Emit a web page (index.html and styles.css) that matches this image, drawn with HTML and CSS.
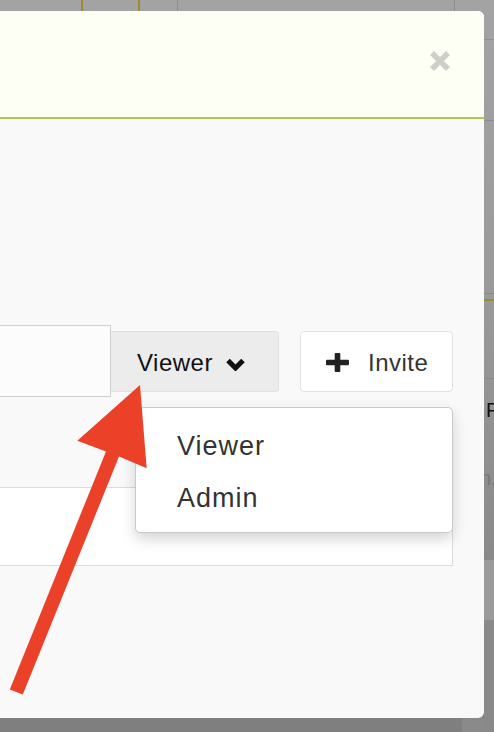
FILE: index.html
```html
<!DOCTYPE html>
<html lang="en">
<head>
<meta charset="utf-8">
<title>Invite</title>
<link rel="stylesheet" href="styles.css">
</head>
<body>
<div class="page">
  <div class="page-main"></div>
  <div class="page-side">
    <span class="side-f">F</span>
    <span class="side-n">n,</span>
  </div>
</div>

<div class="modal">
  <div class="modal-header">
    <button class="close" aria-label="Close">
      <svg width="22" height="22" viewBox="0 0 22 22"><path d="M3 3 L19 19 M19 3 L3 19" stroke="#cdd0c9" stroke-width="5.5" stroke-linecap="butt"/></svg>
    </button>
  </div>
  <div class="modal-body">
    <div class="invite-row">
      <div class="input-group">
        <input class="email" type="text" aria-label="Email">
        <button class="btn-role">
          <span class="role-label">Viewer</span>
          <svg class="chev" width="21" height="14" viewBox="0 0 21 14"><path d="M3 3.5 L10.5 11 L18 3.5" fill="none" stroke="#111" stroke-width="5" stroke-linejoin="miter"/></svg>
        </button>
      </div>
      <button class="btn-invite">
        <svg class="plus" width="23" height="19" viewBox="0 0 23 19"><rect x="0" y="6.7" width="23" height="5.6" rx="1" fill="#222"/><rect x="8.7" y="0" width="5.6" height="19" rx="1" fill="#222"/></svg>
        <span>Invite</span>
      </button>
      <ul class="dropdown">
        <li>Viewer</li>
        <li>Admin</li>
      </ul>
    </div>
    <div class="members"></div>
  </div>
</div>

<svg class="annotation" width="494" height="732" viewBox="0 0 494 732">
  <polygon points="140,385 146.7,468.3 119,456.6 22.8,694.6 9.8,689.4 106,451.4 77.3,440.7" fill="#ec4129"/>
</svg>
</body>
</html>
```

FILE: styles.css
```css
* { box-sizing: border-box; }
html, body {
  margin: 0;
  padding: 0;
  width: 494px;
  height: 732px;
  overflow: hidden;
  font-family: "Liberation Sans", Arial, sans-serif;
}
body { position: relative; }

.page {
  display: grid;
  grid-template-columns: 1fr 10px;
  width: 494px;
  height: 732px;
  background: linear-gradient(#a3a3a3 0%, #9a9a9a 40%, #8a8a8a 75%, #7f7f7f 100%);
}
.page-main {
  background:
    linear-gradient(90deg, transparent 81px, #9c8a34 81px, #9c8a34 83px, transparent 83px,
      transparent 138px, #9c8a34 138px, #9c8a34 140px, transparent 140px,
      transparent 177px, #8f8f8f 177px, #8f8f8f 178px, transparent 178px,
      transparent 454px, #8e8e8e 454px, #8e8e8e 455px, transparent 455px) top left / 100% 12px no-repeat,
    linear-gradient(90deg, transparent 462px, #8a8a8a 462px) bottom left / 100% 14px no-repeat;
}
.page-side {
  display: flex;
  flex-direction: column;
  padding-top: 398px;
  overflow: hidden;
  background:
    linear-gradient(#8f8f8f, #8f8f8f) 0 39px / 100% 1px no-repeat,
    linear-gradient(#8f8f8f, #8f8f8f) 0 120px / 100% 1px no-repeat,
    linear-gradient(#8a8a8a, #8a8a8a) 0 293px / 100% 1px no-repeat,
    linear-gradient(#9a8a3a, #9a8a3a) 0 299px / 100% 2px no-repeat,
    linear-gradient(#888, #888) 0 378px / 100% 1px no-repeat,
    linear-gradient(#9b9b9b, #9b9b9b) 0 560px / 100% 60px no-repeat,
    linear-gradient(#898989, #898989) 0 620px / 100% 112px no-repeat;
}
.side-f {
  font-size: 20px;
  line-height: 24px;
  color: #111;
  padding-left: 2px;
}
.side-n {
  margin-top: 44px;
  font-size: 20px;
  line-height: 24px;
  color: #777;
  margin-left: -4px;
}

.modal {
  position: absolute;
  top: 11px;
  left: -40px;
  width: 524px;
  height: 707px;
  border-radius: 6px;
  background: #f9f9f9;
  display: flex;
  flex-direction: column;
}
.modal-header {
  height: 108px;
  background: #fdfef4;
  border-bottom: 2px solid #b1c848;
  border-radius: 6px 6px 0 0;
  display: flex;
  justify-content: flex-end;
  align-items: flex-start;
  padding: 39px 33px 0 0;
}
.close {
  width: 22px;
  height: 22px;
  padding: 0;
  border: 0;
  background: none;
  display: block;
}
.close svg { display: block; }

.modal-body {
  flex: 1;
  padding: 206px 31px 0 30px;
}
.invite-row {
  position: relative;
  display: flex;
  align-items: center;
  gap: 21px;
}
.input-group {
  flex: 1;
  min-width: 0;
  display: flex;
  align-items: center;
}
.email {
  flex: 1 1 0;
  width: 0;
  min-width: 0;
  height: 72px;
  border: 1px solid #cfcfcf;
  background: #fcfcfc;
  margin: 0;
  padding: 0 12px;
}
.btn-role {
  flex: none;
  width: 168px;
  height: 61px;
  margin: 0;
  background: #ececec;
  border: 1px solid #e0e0e0;
  border-left: 0;
  border-radius: 0 4px 4px 0;
  display: flex;
  align-items: center;
  justify-content: flex-start;
  gap: 12px;
  padding: 4px 0 0 26px;
  font-family: inherit;
  font-size: 24px;
  letter-spacing: 0.5px;
  color: #111;
}
.chev { display: block; margin-top: 1px; }
.btn-invite {
  flex: none;
  width: 153px;
  height: 61px;
  margin: 0;
  background: #fff;
  border: 1px solid #e2e2e2;
  border-radius: 4px;
  display: flex;
  align-items: center;
  gap: 19px;
  padding: 4px 0 0 25px;
  font-family: inherit;
  font-size: 24px;
  letter-spacing: 0.5px;
  color: #333;
}
.plus { display: block; margin-top: -1px; }

.dropdown {
  position: absolute;
  top: calc(100% + 10px);
  right: 0;
  width: 318px;
  margin: 0;
  padding: 12px 0 8px 0;
  list-style: none;
  background: #fff;
  border: 1px solid #c9c9c9;
  border-radius: 5px;
  box-shadow: 0 6px 14px rgba(0, 0, 0, 0.17);
  z-index: 2;
}
.dropdown li {
  height: 52px;
  line-height: 52px;
  padding-left: 41px;
  font-size: 27px;
  letter-spacing: 1px;
  color: #333;
}

.members {
  margin-top: 90px;
  height: 79px;
  background: #fff;
  border: 1px solid #dcdcdc;
  margin-left: -2px;
}

.annotation {
  position: absolute;
  top: 0;
  left: 0;
  z-index: 5;
}
```
